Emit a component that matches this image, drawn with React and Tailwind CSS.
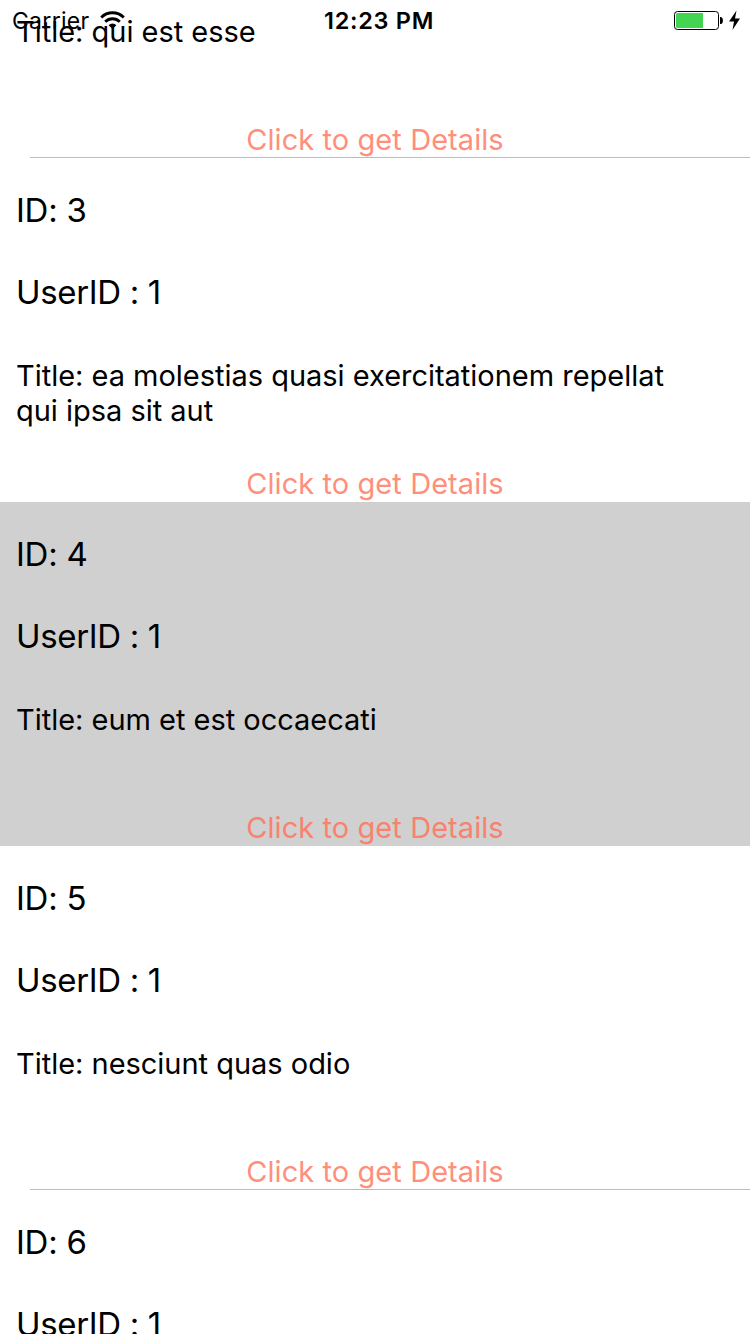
const posts = [
  { id: 2, lines: ["Title: qui est esse"] },
  { id: 3, lines: ["Title: ea molestias quasi exercitationem repellat", "qui ipsa sit aut"] },
  { id: 4, lines: ["Title: eum et est occaecati"], selected: true },
  { id: 5, lines: ["Title: nesciunt quas odio"] },
  { id: 6, lines: ["Title: dolorem eum magni eos aperiam quia"] },
];

function Row({ post, divider }) {
  return (
    <li
      className={`relative flex h-[344px] shrink-0 flex-col pt-[31px] ${
        post.selected ? "bg-[#d0d0d0]" : "bg-white"
      }`}
    >
      <p className="h-[42px] pl-4 text-[33px] leading-[42px] tracking-[-0.25px]">ID: {post.id}</p>
      <p className="mt-10 h-[42px] pl-4 text-[33px] leading-[42px] tracking-[-0.35px]">UserID : 1</p>
      <div className="mt-[45px] h-[70px] pl-4 text-[29px] leading-[35px] tracking-[-0.02px]">
        {post.lines.map((line) => (
          <p key={line} className="whitespace-nowrap">{line}</p>
        ))}
      </div>
      <button
        className={`mt-[38px] h-9 self-center text-[29px] leading-9 tracking-[0.07px] ${
          post.selected ? "text-[#f9826e]" : "text-[#ff8f7b]"
        }`}
      >
        Click to get Details
      </button>
      {divider && <div className="absolute right-0 bottom-0 left-[30px] h-px bg-[#bcbbc1]" />}
    </li>
  );
}

function StatusBar() {
  return (
    <header className="absolute inset-x-0 top-0 flex h-[42px] items-center">
      <span className="pl-3 text-[23px] leading-[28px] tracking-[0.3px]">Carrier</span>
      <svg className="absolute top-[10.5px] left-[99px]" width="27" height="19" viewBox="0 0 27 19" fill="none">
        <path d="M2.2 6.4a16 16 0 0 1 22.6 0" stroke="#000" strokeWidth="2.8" />
        <path d="M6.2 10.7a10.5 10.5 0 0 1 14.6 0" stroke="#000" strokeWidth="2.8" />
        <path d="M13.5 18 9.6 14.2a5.6 5.6 0 0 1 7.8 0Z" fill="#000" />
      </svg>
      <span className="absolute left-[324px] text-[23.5px] leading-[28px] font-semibold tracking-[0.7px] whitespace-nowrap">
        12:23 PM
      </span>
      <svg className="absolute top-[9px] left-[673px]" width="70" height="23" viewBox="0 0 70 23">
        <rect x="1.5" y="2.5" width="44" height="18" rx="3" fill="#fff" stroke="#000" />
        <path d="M3 5.5Q3 4 4.500 4H30V19H4.500Q3 19 3 17.500Z" fill="#43d551" />
        <path d="M47 8h1.200Q50 9 50 11.500T48.200 15H47Z" fill="#000" />
        <path d="M63.500 1.500 56 12.500h5L59.500 21 67 9.500h-5Z" fill="#000" />
      </svg>
    </header>
  );
}

export default function App() {
  return (
    <main className="relative h-[1334px] w-[750px] overflow-hidden bg-white font-['Inter',sans-serif] text-black">
      <ul className="-mt-[186px] flex flex-col">
        {posts.map((post) => (
          <Row key={post.id} post={post} divider={post.id === 2 || post.id === 5} />
        ))}
      </ul>
      <StatusBar />
    </main>
  );
}
